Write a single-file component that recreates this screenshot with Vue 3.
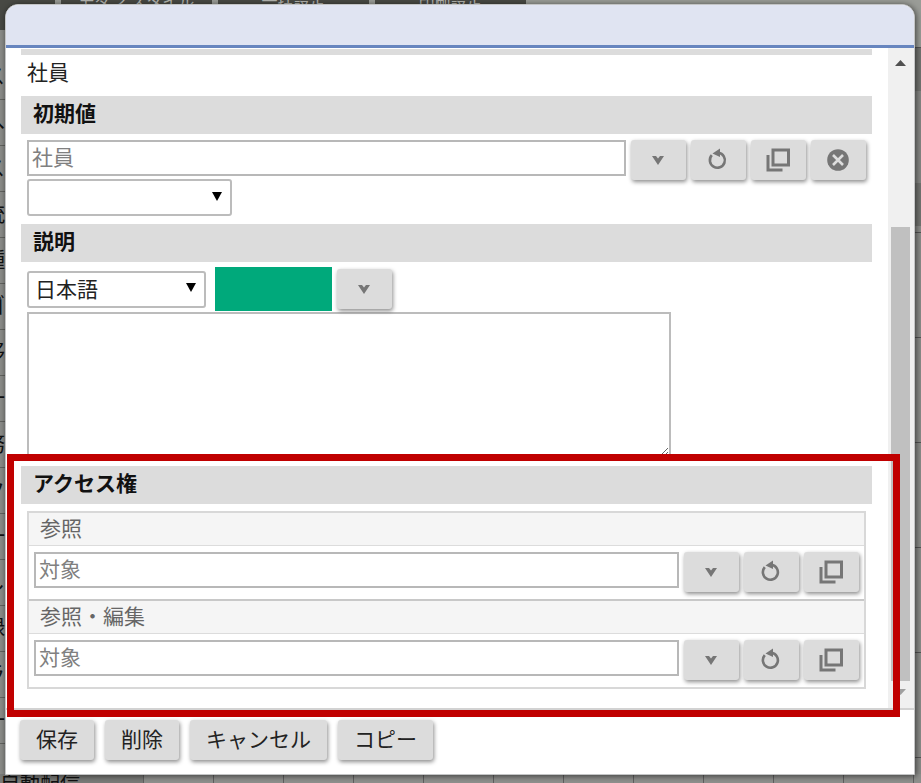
<script setup>
import { ref } from 'vue'

const defaultTarget = ref('')
const defaultKind = ref('')
const language = ref('ja')
const description = ref('')

const tabs = ['モダン スタイル', '一括設定', '印刷設定']
const sideRows = ['ス', 'へ', 'ス', '統', '種', 'ゴ', '移', '一', '務', 'ク', '一', 'し', '録', 'ラ', '一']
const groups = ref([
  { id: 'view', title: '参照', target: '' },
  { id: 'edit', title: '参照・編集', target: '' },
])
const tools = [
  { id: 'open', label: '選択肢を開く' },
  { id: 'undo', label: '元に戻す' },
  { id: 'window', label: '別ウィンドウ' },
  { id: 'clear', label: 'クリア' },
]
const actions = ['保存', '削除', 'キャンセル', 'コピー']
</script>

<template>
  <div class="page">
    <div class="backdrop" aria-hidden="true">
      <div class="tabs">
        <span v-for="tab in tabs" :key="tab" class="tab">{{ tab }}</span>
      </div>
      <div class="back-main">
        <div class="side">
          <span v-for="(row, i) in sideRows" :key="i" class="side-row">{{ row }}</span>
        </div>
        <div class="right-cells">
          <span class="cell-top"></span>
          <span class="cell-dark"></span>
          <span class="cell-mid"></span>
          <span class="cell-dark"></span>
          <span class="cell-rest"></span>
        </div>
      </div>
      <div class="bottom">
        <span class="bottom-name">自動配信</span>
        <span class="bottom-cells"></span>
      </div>
    </div>

    <div class="dialog" role="dialog" aria-label="項目の設定">
      <header class="title-bar"></header>
      <div class="body">
        <main class="content">
          <div class="bar-rest"></div>
          <p class="value">社員</p>

          <h2 class="bar">初期値</h2>
          <div class="row top-row">
            <input v-model="defaultTarget" class="text" type="text" placeholder="社員" aria-label="初期値">
            <button v-for="tool in tools" :key="tool.id" class="tool" type="button" :aria-label="tool.label">
              <svg v-if="tool.id === 'open'" width="24" height="24" viewBox="0 0 24 24"><path d="M6 8h4L12 10.500l2-2.500H18l-6 9z" fill="#767676" /></svg>
              <svg v-else-if="tool.id === 'undo'" width="24" height="24" viewBox="0 0 24 24"><path d="M5.800 7.200A7.500 7.500 0 1 0 12.500 4.800" fill="none" stroke="#767676" stroke-width="2.600" /><path d="M14 .500v8.500L6.500 5.500z" fill="#767676" /></svg>
              <svg v-else-if="tool.id === 'window'" width="24" height="24" viewBox="0 0 24 24"><path d="M7 2h15.500v15H7z" fill="none" stroke="#767676" stroke-width="3" /><path d="M2 7v15h14.500" fill="none" stroke="#767676" stroke-width="3" /></svg>
              <svg v-else width="24" height="24" viewBox="0 0 24 24"><circle cx="12" cy="12" r="10.800" fill="#767676" /><path d="M7 7l10 10M17 7L7 17" stroke="#ddd" stroke-width="2.600" /></svg>
            </button>
          </div>
          <div class="select kind">
            <select v-model="defaultKind" aria-label="初期値の種類"><option value=""></option></select>
            <svg width="10" height="9" viewBox="0 0 10 9"><path d="M0 0h10L5 9z" /></svg>
          </div>

          <h2 class="bar after-kind">説明</h2>
          <div class="row lang-row">
            <div class="select lang">
              <select v-model="language" aria-label="言語"><option value="ja">日本語</option></select>
              <svg width="10" height="9" viewBox="0 0 10 9"><path d="M0 0h10L5 9z" /></svg>
            </div>
            <div class="swatch"></div>
            <button class="tool" type="button" aria-label="言語を開く">
              <svg width="24" height="24" viewBox="0 0 24 24"><path d="M6 8h4L12 10.500l2-2.500H18l-6 9z" fill="#767676" /></svg>
            </button>
          </div>
          <textarea v-model="description" class="description" aria-label="説明"></textarea>

          <section class="access">
            <h2 class="bar">アクセス権</h2>
            <div class="groups">
              <div v-for="group in groups" :key="group.id" class="group">
                <label class="group-title" :for="group.id">{{ group.title }}</label>
                <div class="row group-row">
                  <input :id="group.id" v-model="group.target" class="text" type="text" placeholder="対象">
                  <button v-for="tool in tools.slice(0, 3)" :key="tool.id" class="tool" type="button" :aria-label="tool.label">
                    <svg v-if="tool.id === 'open'" width="24" height="24" viewBox="0 0 24 24"><path d="M6 8h4L12 10.500l2-2.500H18l-6 9z" fill="#767676" /></svg>
                    <svg v-else-if="tool.id === 'undo'" width="24" height="24" viewBox="0 0 24 24"><path d="M5.800 7.200A7.500 7.500 0 1 0 12.500 4.800" fill="none" stroke="#767676" stroke-width="2.600" /><path d="M14 .500v8.500L6.500 5.500z" fill="#767676" /></svg>
                    <svg v-else width="24" height="24" viewBox="0 0 24 24"><path d="M7 2h15.500v15H7z" fill="none" stroke="#767676" stroke-width="3" /><path d="M2 7v15h14.500" fill="none" stroke="#767676" stroke-width="3" /></svg>
                  </button>
                </div>
              </div>
            </div>
            <div class="highlight"></div>
          </section>
        </main>
        <div class="scrollbar" aria-hidden="true">
          <svg class="arrow" width="11" height="6" viewBox="0 0 11 6"><path d="M0 6h11L5.500 0z" fill="#505050" /></svg>
          <span class="thumb"></span>
          <svg class="arrow" width="11" height="6" viewBox="0 0 11 6"><path d="M0 0h11L5.500 6z" fill="#a0a0a0" /></svg>
        </div>
      </div>
      <footer class="actions">
        <button v-for="action in actions" :key="action" class="action" type="button">{{ action }}</button>
      </footer>
    </div>
  </div>
</template>

<style>
body {
  margin: 0;
}
</style>

<style scoped>
* {
  box-sizing: border-box;
}
.page {
  display: grid;
  grid-template-columns: minmax(0, 1fr);
  min-height: 100vh;
  font-family: "Noto Sans CJK JP", "Noto Sans", sans-serif;
  font-size: 21px;
  line-height: 30px;
  color: #222;
}
.backdrop,
.dialog {
  grid-area: 1 / 1;
}
.backdrop {
  display: flex;
  flex-direction: column;
  min-width: 0;
  overflow: hidden;
  background: #8b8c89;
  color: #111;
}
.tabs {
  display: flex;
  gap: 6px;
  height: 30px;
  padding-left: 61px;
  background: linear-gradient(90deg, #484944 55px, #9a9c97 55px);
}
.tab {
  flex: 0 0 151px;
  height: 30px;
  margin-top: -12px;
  background: #484944;
  color: #b4b5b0;
  font-size: 16px;
  line-height: 24px;
  text-align: center;
  white-space: nowrap;
}
.back-main {
  display: flex;
  flex: 1;
  justify-content: space-between;
}
.side {
  display: flex;
  flex-direction: column;
  width: 5px;
  padding-top: 24px;
  overflow: hidden;
}
.side-row {
  display: flex;
  justify-content: flex-end;
  height: 46px;
  border-bottom: 1px solid #62635f;
  line-height: 40px;
}
.right-cells {
  display: flex;
  flex-direction: column;
  width: 6px;
}
.cell-top {
  height: 18px;
  background: #9a9c97;
  border-bottom: 1px solid #555;
}
.cell-dark {
  height: 43px;
  background: #737471;
}
.cell-mid {
  height: 92px;
  background: #868784;
}
.cell-rest {
  flex: 1;
  background: repeating-linear-gradient(#8b8c89 0 6px, #555 6px 7px, #8b8c89 7px 105px);
}
.bottom {
  display: flex;
  height: 9px;
  overflow: hidden;
}
.bottom-name {
  width: 143px;
  background: #7a7b78;
  font-size: 20px;
  line-height: 18px;
}
.bottom-cells {
  flex: 1;
  background: repeating-linear-gradient(90deg, #606060 0 1px, #8f908d 1px 70px);
}
.dialog {
  display: flex;
  flex-direction: column;
  margin: 4px 6px 8px 5px;
  border: 1px solid #c4c5c6;
  border-radius: 13px 13px 0 0;
  background: #fff;
  box-shadow: 1px 1px 6px rgba(0, 0, 0, 0.6);
}
.title-bar {
  height: 43px;
  border-bottom: 3px solid #6785bf;
  border-radius: 12px 12px 0 0;
  background: #e0e4f2;
}
.body {
  display: flex;
  flex: 1;
  border-bottom: 2px solid #d2d2d2;
}
.content {
  flex: 1;
  min-width: 0;
  padding: 1px 16px 18px 15px;
}
.bar-rest {
  height: 6px;
  background: #dcdcdc;
}
.value {
  margin: 0;
  padding: 1px 6px 10px;
}
.bar {
  height: 38px;
  margin: 0;
  padding: 1px 12px 7px;
  background: #dcdcdc;
  color: #111;
  font-size: 21px;
  font-weight: 700;
  line-height: 30px;
}
.row {
  display: flex;
  gap: 5px;
}
.top-row {
  margin: 6px 6px 0;
}
.text {
  flex: 1;
  min-width: 0;
  height: 36px;
  margin: 0;
  padding: 0 3px 5px;
  border: 2px solid #b8b8b8;
  border-radius: 0;
  background: #fff;
  color: #222;
  font: inherit;
}
.text::placeholder {
  color: #808080;
  opacity: 1;
}
.tool,
.action {
  border: 0;
  border-radius: 3px;
  background: #dcdcdc;
  box-shadow: 1px 2px 4px rgba(0, 0, 0, 0.45);
}
.tool {
  display: flex;
  flex: 0 0 55px;
  align-items: center;
  justify-content: center;
  height: 40px;
  padding: 0 1px 1px 0;
}
.top-row .tool {
  margin-bottom: -1px;
}
.select {
  display: grid;
  align-items: center;
}
.select select,
.select svg {
  grid-area: 1 / 1;
}
.select select {
  width: 100%;
  height: 37px;
  padding: 0 6px 3px;
  border: 2px solid #bcbcbc;
  border-radius: 3px;
  appearance: none;
  background: #fff;
  color: #222;
  font: inherit;
}
.select svg {
  justify-self: end;
  margin: 0 10px 3px 0;
  pointer-events: none;
}
.kind {
  width: 205px;
  margin-left: 6px;
}
.after-kind {
  margin-top: 8px;
}
.lang-row {
  align-items: center;
  margin: 5px 6px 0;
}
.lang {
  width: 179px;
}
.swatch {
  width: 117px;
  height: 44px;
  margin-left: 4px;
  background: #00a97b;
}
.description {
  display: block;
  width: 644px;
  max-width: 100%;
  height: 146px;
  margin: 1px 6px 0;
  padding: 4px;
  border: 2px solid #bcbcbc;
  border-radius: 0;
  font: inherit;
}
.access {
  position: relative;
  margin-top: 8px;
}
.groups {
  margin: 7px 6px 0;
  border: 2px solid #d8d8d8;
}
.group + .group {
  border-top: 2px solid #c8c8c8;
}
.group-title {
  display: block;
  padding: 0 11px 3px;
  border-bottom: 1px solid #dcdcdc;
  background: #f5f5f5;
  color: #666;
  line-height: 29px;
}
.group-row {
  margin: 6px 5px 7px;
}
.highlight {
  position: absolute;
  inset: -12px -28px -28px -14px;
  border: 7px solid #c00000;
  pointer-events: none;
}
.scrollbar {
  display: flex;
  flex: 0 0 26px;
  flex-direction: column;
  align-items: center;
  padding: 12px 4px 13px 3px;
  background: #f0f0f0;
}
.arrow {
  flex: none;
}
.thumb {
  flex: 1;
  align-self: stretch;
  margin: 161px 0 8px;
  background: #c0c0c0;
}
.actions {
  display: flex;
  gap: 11px;
  padding: 10px 14px 14px;
}
.action {
  height: 40px;
  padding: 0 16px 5px;
  color: #222;
  font: inherit;
}
</style>
